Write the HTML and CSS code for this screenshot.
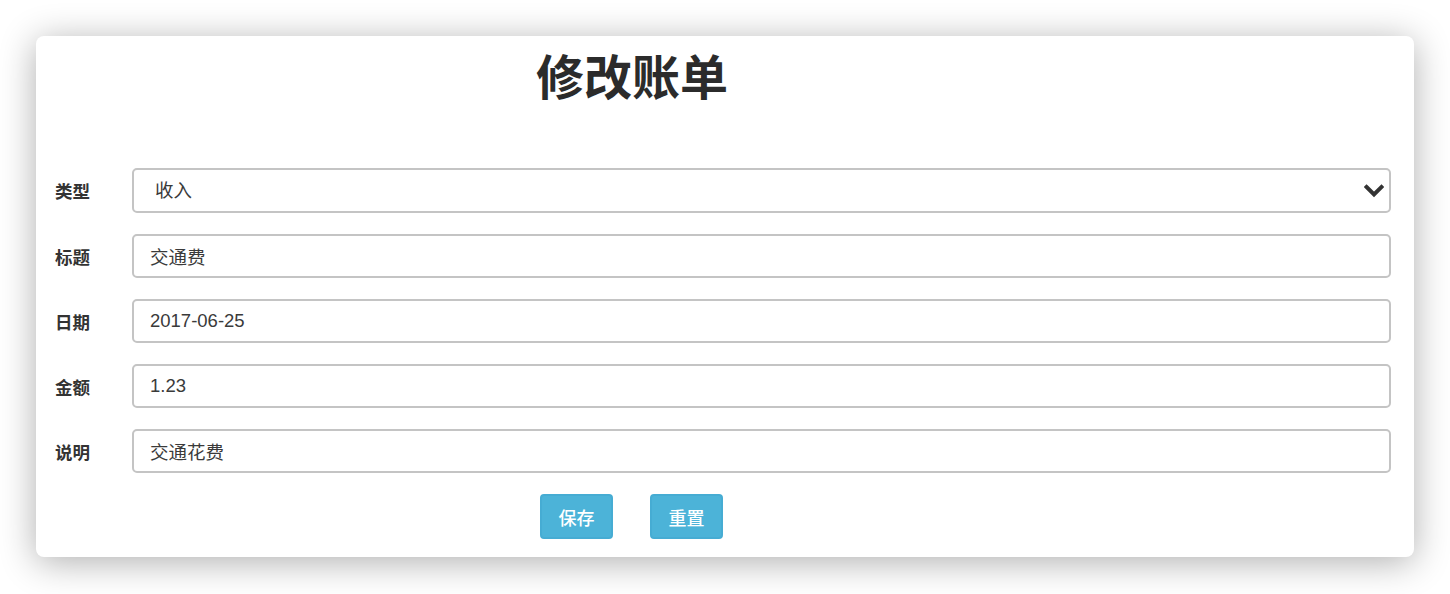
FILE: index.html
```html
<!DOCTYPE html>
<html lang="zh-CN">
<head>
<meta charset="utf-8">
<title>修改账单</title>
<link rel="stylesheet" href="styles.css">
</head>
<body>
<div class="window">
  <h1 class="title">修改账单</h1>
  <form class="form">
    <div class="row">
      <label class="label">类型</label>
      <div class="select-wrap">
        <select class="control select">
          <option>收入</option>
          <option>支出</option>
        </select>
        <svg class="chevron" width="20" height="14" viewBox="0 0 20 14"><path d="M2.5 3 L10 10.5 L17.5 3" fill="none" stroke="#333" stroke-width="4" stroke-linecap="square"/></svg>
      </div>
    </div>
    <div class="row">
      <label class="label">标题</label>
      <input class="control" type="text" value="交通费">
    </div>
    <div class="row">
      <label class="label">日期</label>
      <input class="control" type="text" value="2017-06-25">
    </div>
    <div class="row">
      <label class="label">金额</label>
      <input class="control" type="text" value="1.23">
    </div>
    <div class="row">
      <label class="label">说明</label>
      <input class="control" type="text" value="交通花费">
    </div>
    <div class="actions">
      <button class="btn" type="button">保存</button>
      <button class="btn" type="button">重置</button>
    </div>
  </form>
</div>
</body>
</html>
```
FILE: styles.css
```css
html, body {
  margin: 0;
  padding: 0;
  background: #ffffff;
}
body {
  font-family: "Liberation Sans", "Noto Sans CJK SC", sans-serif;
  color: #333;
  padding: 36px 36px 0 36px;
  height: 594px;
  box-sizing: border-box;
  overflow: hidden;
}
.window {
  width: 1378px;
  height: 521px;
  box-sizing: border-box;
  background: #fff;
  border-radius: 8px;
  box-shadow: 0 5px 36px rgba(0, 0, 0, 0.32);
  padding: 19px 23px 0 19px;
}
.title {
  margin: 0;
  padding-left: 481px;
  font-size: 48px;
  line-height: 48px;
  font-weight: bold;
  color: #2b2b2b;
}
.form {
  margin-top: 65px;
  display: flex;
  flex-direction: column;
  gap: 21px;
}
.row {
  display: grid;
  grid-template-columns: 77px 1fr;
  align-items: center;
}
.label {
  font-size: 17.5px;
  font-weight: bold;
  color: #333;
}
.control {
  box-sizing: border-box;
  width: 100%;
  height: 44px;
  border: 2px solid #c4c4c4;
  border-radius: 5px;
  background: #fff;
  padding: 0 16px;
  font-family: "Liberation Sans", "Noto Sans CJK SC", sans-serif;
  font-size: 18.5px;
  color: #3a3a3a;
  outline: none;
  margin: 0;
  display: block;
}
.select-wrap {
  position: relative;
}
.select {
  -webkit-appearance: none;
  appearance: none;
  padding-left: 21px;
  height: 45px;
}
.chevron {
  position: absolute;
  right: 7px;
  top: 16px;
  pointer-events: none;
}
.actions {
  display: flex;
  gap: 37px;
  padding-left: 485px;
}
.btn {
  width: 73px;
  height: 45px;
  box-sizing: border-box;
  border: 2px solid #46acd3;
  border-radius: 4px;
  background: #4cb3d8;
  color: #fff;
  font-family: "Liberation Sans", "Noto Sans CJK SC", sans-serif;
  font-size: 18px;
  font-weight: 500;
  padding: 0;
}
```
